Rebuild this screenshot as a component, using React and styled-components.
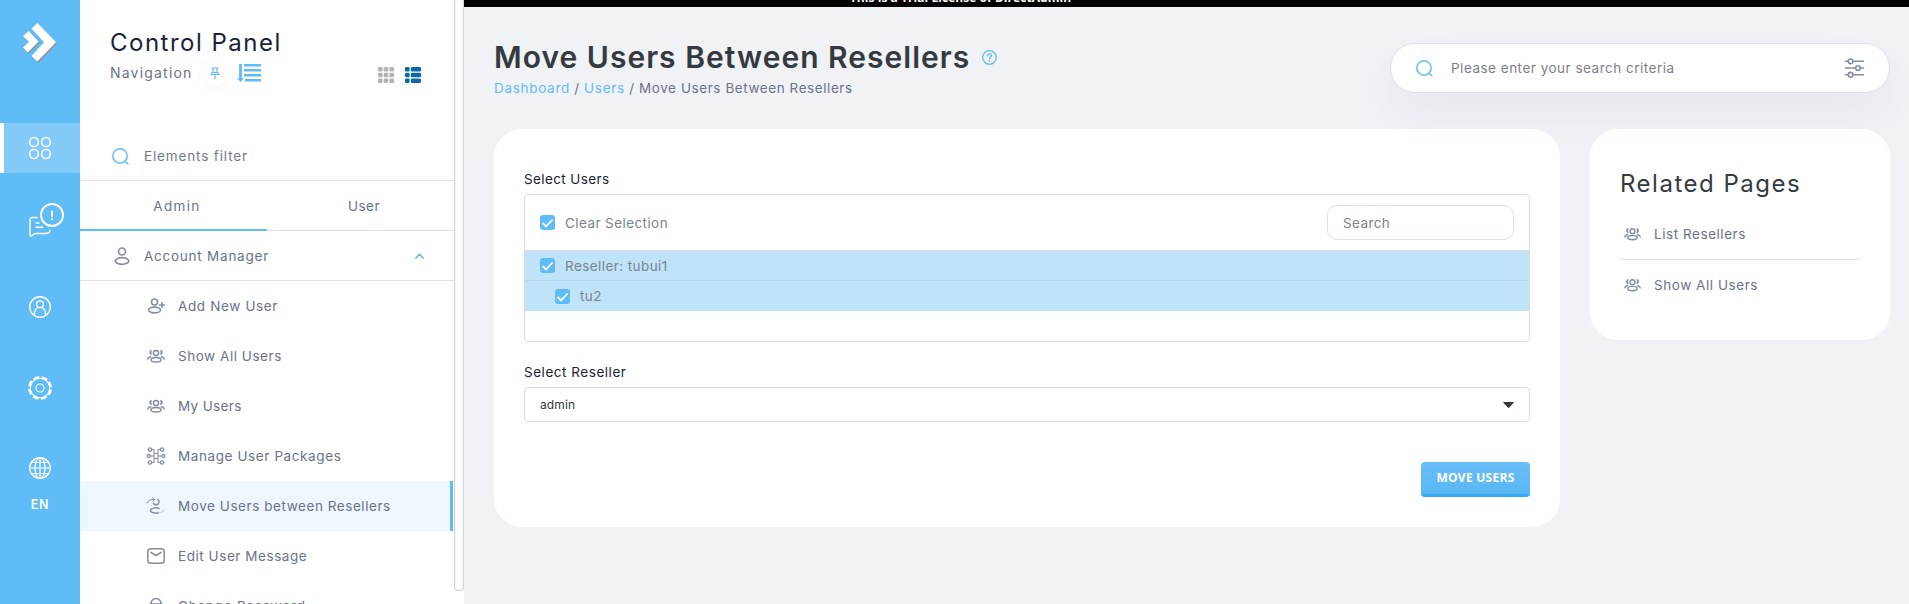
import React from 'react';
import styled, { createGlobalStyle } from 'styled-components';

const GlobalStyle = createGlobalStyle`
  *, *::before, *::after { box-sizing: border-box; }
  body {
    margin: 0;
    overflow: hidden;
    background: #f1f2f6;
    color: #6a7389;
    font: 400 13.5px/20px Inter, "Open Sans", sans-serif;
  }
  svg { display: block; flex: none; overflow: visible; }
`;

const accent = '#60bcf7';
const line = '#dce1ea';

const Page = styled.div`
  display: flex;
  height: 604px;
  overflow: hidden;
`;

/* Left rail */
const Rail = styled.nav`
  display: flex;
  flex-direction: column;
  align-items: center;
  flex: none;
  width: 80px;
  background: ${accent};
  color: #fff;
`;
const LogoBox = styled.div`
  height: 123px;
  padding-top: 23px;
`;
const RailItem = styled.div`
  display: flex;
  align-items: center;
  justify-content: center;
  width: 80px;
  height: ${(p) => p.$h}px;
  border-left: 4px solid ${(p) => (p.$active ? '#fff' : 'transparent')};
  padding-right: 4px;
  background: ${(p) => (p.$active ? '#83caf8' : 'transparent')};
  background-clip: padding-box;
`;
const Lang = styled.div`
  margin-top: -12px;
  font-size: 12.5px;
  font-weight: 600;
  letter-spacing: 0.8px;
`;

/* Navigation panel */
const Panel = styled.aside`
  flex: none;
  width: 374px;
  height: 604px;
  overflow: hidden;
  background: #fff;
`;
const PanelHead = styled.header`
  display: flex;
  justify-content: space-between;
  height: 130px;
  padding: 27px 33px 0 30px;
`;
const PanelTitle = styled.h2`
  margin: 0;
  color: #1b2338;
  font-size: 24px;
  font-weight: 400;
  line-height: 32px;
  letter-spacing: 1.49px;
`;
const SubTitle = styled.div`
  display: flex;
  align-items: center;
  height: 28px;
`;
const SubText = styled.span`
  width: 93px;
  font-size: 14px;
  letter-spacing: 1.2px;
`;
const RoundButton = styled.span`
  display: flex;
  align-items: center;
  justify-content: center;
  width: 24px;
  height: 24px;
  margin-right: 10px;
  border-radius: 50%;
  background: #fff;
  box-shadow: 0 4px 10px rgba(80, 90, 140, 0.05);
`;
const ViewSwitch = styled.div`
  display: flex;
  gap: 11px;
  padding-top: 40px;
`;
const Filter = styled.div`
  display: flex;
  align-items: center;
  gap: 15px;
  height: 51px;
  padding: 2px 0 0 32px;
  border-bottom: 1px solid ${line};
  letter-spacing: 0.86px;
  color: #707a88;
`;
const Tabs = styled.div`
  display: flex;
  height: 50px;
`;
const Tab = styled.div`
  flex: 1;
  padding: 15px 0 0 7px;
  text-align: center;
  letter-spacing: ${(p) => (p.$active ? 1.35 : 0.5)}px;
  border-bottom: ${(p) => (p.$active ? `2px solid ${accent}` : `1px solid ${line}`)};
`;
const Group = styled.div`
  display: flex;
  align-items: center;
  height: 50px;
  padding: 0 30px 0 34px;
  border-bottom: 1px solid ${line};
`;
const GroupLabel = styled.span`
  flex: 1;
  margin-left: 14px;
  letter-spacing: 0.76px;
`;
const Entry = styled.a`
  display: flex;
  align-items: center;
  gap: 13px;
  width: 373px;
  height: 50px;
  padding-left: 67px;
  letter-spacing: ${(p) => p.$ls}px;
  background: ${(p) => (p.$active ? '#eef7fe' : 'transparent')};
  border-right: 3px solid ${(p) => (p.$active ? accent : 'transparent')};
`;
const Gutter = styled.div`
  flex: none;
  width: 10px;
  background: #fff;
`;
const Thumb = styled.div`
  height: 591px;
  border: 1px solid #d4d4d4;
  border-top: 0;
  border-radius: 0 0 4px 4px;
  background: #fff;
  box-shadow: inset 0 0 2px rgba(0, 0, 0, 0.12);
`;

/* Main area */
const Main = styled.main`
  flex: 1;
  min-width: 0;
`;
const Banner = styled.div`
  display: flex;
  align-items: flex-end;
  justify-content: center;
  height: 7px;
  padding: 0 0 1px 0;
  overflow: hidden;
  background: #000;
  color: #fff;
  font: 700 12px/16px "Open Sans", sans-serif;
  letter-spacing: 0.05px;
`;
const BannerText = styled.span`
  margin-right: 452px;
`;
const Header = styled.header`
  display: flex;
  justify-content: space-between;
  height: 122px;
  padding: 30px 19px 0 30px;
`;
const TitleRow = styled.div`
  display: flex;
  align-items: center;
  gap: 12px;
  height: 40px;
`;
const Title = styled.h1`
  margin: -1px 0 0;
  color: #343a40;
  font-size: 30px;
  font-weight: 600;
  line-height: 40px;
  letter-spacing: 1.02px;
`;
const Crumbs = styled.div`
  margin-top: 1px;
  letter-spacing: 0.57px;
`;
const CrumbLink = styled.a`
  color: ${accent};
  letter-spacing: 0.7px;
`;
const SearchBar = styled.div`
  display: flex;
  align-items: center;
  position: relative;
  width: 500px;
  height: 50px;
  margin-top: 6px;
  padding: 0 25px;
  border: 1px solid ${line};
  border-radius: 25px;
  background: #fff;
  box-shadow: 0 20px 40px rgba(80, 80, 140, 0.06);
`;
const SearchHint = styled.span`
  flex: 1;
  margin-left: 18px;
  color: #7c7f86;
  letter-spacing: 0.5px;
`;
const Content = styled.div`
  display: flex;
  align-items: flex-start;
  gap: 30px;
  padding: 0 19px 0 30px;
`;
const Card = styled.section`
  flex: 1;
  height: 398px;
  padding: 40px 30px 0;
  border-radius: 28px;
  background: #fff;
`;
const Label = styled.div`
  height: 25px;
  color: #1b2338;
  letter-spacing: ${(p) => p.$ls}px;
`;
const SelectBox = styled.div`
  height: 148px;
  margin-bottom: 20px;
  border: 1px solid #dcdcdc;
  border-radius: 4px;
`;
const SelectHead = styled.div`
  display: flex;
  align-items: center;
  justify-content: space-between;
  height: 56px;
  padding: 0 15px;
  border-bottom: 1px solid #d9dde2;
`;
const Check = styled.div`
  display: flex;
  align-items: center;
  gap: 10px;
  color: #7b828c;
  letter-spacing: 0.42px;
`;
const ListSearch = styled.div`
  width: 187px;
  height: 35px;
  padding: 7px 15px;
  border: 1px solid #dde1ec;
  border-radius: 10px;
  color: #808388;
  letter-spacing: 0.4px;
`;
const ListRow = styled.div`
  display: flex;
  align-items: center;
  height: 30px;
  padding-left: ${(p) => (p.$child ? 30 : 15)}px;
  background: #bfe4fa;
  border-bottom: ${(p) => (p.$child ? 0 : 1)}px solid #b3d8ee;
`;
const Dropdown = styled.div`
  display: flex;
  align-items: center;
  justify-content: space-between;
  height: 35px;
  padding: 0 15px;
  border: 1px solid #dcdcdc;
  border-radius: 4px;
  color: #343a40;
  font-size: 12px;
  letter-spacing: 0.1px;
`;
const Actions = styled.div`
  display: flex;
  justify-content: flex-end;
  margin-top: 40px;
`;
const Button = styled.button`
  width: 109px;
  height: 35px;
  padding: 0;
  border: 0;
  border-bottom: 3px solid #35a7f1;
  border-radius: 4px;
  background: linear-gradient(#69bff8, #59b7f5);
  color: #fff;
  font: 700 12px/32px "Open Sans", sans-serif;
  letter-spacing: 0.27px;
`;
const Related = styled.aside`
  width: 300px;
  height: 211px;
  padding: 38px 30px 0;
  border-radius: 28px;
  background: #fff;
`;
const RelatedTitle = styled.h3`
  margin: 0 0 8px;
  color: #343a40;
  font-size: 24px;
  font-weight: 400;
  line-height: 34px;
  letter-spacing: 1.5px;
`;
const RelatedLink = styled.a`
  display: flex;
  align-items: center;
  gap: 13px;
  height: 50px;
  padding-left: 4px;
  letter-spacing: 0.55px;
  & + & { height: 51px; border-top: 1px solid #dbdfe7; }
`;

/* Drawings */
const Svg = ({ w = 18, h = w, vw = w, vh = h, sw = 1.3, color = '#858da3', children }) => (
  <svg width={w} height={h} viewBox={`0 0 ${vw} ${vh}`} fill="none" stroke={color} strokeWidth={sw} strokeLinecap="round" strokeLinejoin="round">
    {children}
  </svg>
);

const Logo = () => (
  <svg width="35" height="40" viewBox="0 0 35 40">
    <g fill="#8d9296" transform="translate(1 1.3)">
      <path d="M8.5 5.7 14.4 0 33 19.3 14.4 38.6 8.5 33 21 19.3Z" />
      <path d="M0 13.2 5.6 8 15.5 18.4 4.8 29.5 0 24.6 6 18.8Z" />
    </g>
    <g fill="#fff">
      <path d="M8.5 5.7 14.4 0 33 19.3 14.4 38.6 8.5 33 21 19.3Z" />
      <path d="M0 13.2 5.6 8 15.5 18.4 4.8 29.5 0 24.6 6 18.8Z" />
    </g>
  </svg>
);
const Circles = () => (
  <Svg w={22} color="#fff" sw={1.5}>
    <circle cx="5" cy="5" r="4.4" /><circle cx="17" cy="5" r="4.4" />
    <circle cx="5" cy="17" r="4.4" /><circle cx="17" cy="17" r="4.4" />
  </Svg>
);
const Chat = () => (
  <Svg w={22} h={34} color="#fff" sw={1.4}>
    <path d="M8 14.5H3.5Q1 14.5 1 17v15q0 2 2 .6l3-2.1h11.500q3 0 3.500-3" />
    <path d="M7 20h3M7 24.200h7" />
    <circle cx="23" cy="12" r="11" strokeWidth="1.900" fill={accent} />
    <path d="M23 8.200v5M23 16v.2" strokeWidth="1.900" />
  </Svg>
);
const UserCircle = () => (
  <Svg w={22} color="#fff" sw={1.4}>
    <circle cx="11" cy="11" r="10.300" /><circle cx="11" cy="8.300" r="3.400" />
    <path d="M5.500 19v-1.500c0-3 1.500-5 3.400-6M16.500 19v-1.500c0-3-1.500-5-3.400-6" />
  </Svg>
);
const Gear = () => (
  <Svg w={24} color="#fff" sw={1.1}>
    <circle cx="12" cy="12" r="4" />
    <circle cx="12" cy="12" r="9.800" />
    <circle cx="12" cy="12" r="10.600" strokeWidth="2.800" strokeLinecap="butt" strokeDasharray="5.700 2.625" transform="rotate(8 12 12)" />
  </Svg>
);
const Globe = () => (
  <Svg w={22} color="#fff" sw={1.3}>
    <circle cx="11" cy="11" r="10.300" /><ellipse cx="11" cy="11" rx="5" ry="10.300" />
    <path d="M11 .7v20.600M.7 11h20.600M2.500 5.300h17M2.500 16.700h17" strokeWidth="1.100" />
  </Svg>
);
const Pin = () => (
  <Svg w={10} h={13} color={accent} sw={1.2}>
    <path d="M2 1h6M3 1v4.500M7 1v4.500M1 7.500q.5-2 2-2h4q1.500 0 2 2ZM5 7.500V12" />
  </Svg>
);
const Sort = () => (
  <Svg w={24} h={18} color={accent} sw={2.500}>
    <g strokeLinecap="butt">
      <path d="M7 1.300h17M7 6.300h17M7 11.300h17M8 16.300h16" />
      <path d="M3.500 0v15" strokeWidth="2.800" />
    </g>
    <path d="M0 14.300h7L3.500 18Z" fill={accent} stroke="none" />
  </Svg>
);
const Grid = () => (
  <svg width="16" height="16" fill="#b3b3b3">
    {[0, 5.700, 11.400].map((y) => [0, 5.700, 11.400].map((x) => <rect key={`${x}-${y}`} x={x} y={y} width="4.600" height="4.600" rx="1.300" />))}
  </svg>
);
const ListIcon = () => (
  <svg width="16" height="16" fill="#0c68a8">
    {[0, 5.700, 11.400].map((y) => (
      <g key={y}><rect y={y} width="4.600" height="4.600" rx="1.300" /><rect x="5.900" y={y} width="10.100" height="4.600" rx="1.300" /></g>
    ))}
  </svg>
);
const Magnifier = ({ size = 17 }) => (
  <Svg w={size} vw={17} color={accent} sw={1.5}><circle cx="8" cy="8" r="7.200" /><path d="M13 13.300 16 16" /></Svg>
);
const User = () => (
  <Svg w={16} h={18} sw={1.700}><circle cx="8" cy="4.500" r="3.500" /><ellipse cx="8" cy="14" rx="6.800" ry="3.300" /></Svg>
);
const UserPlus = () => (
  <Svg h={16} sw={1.600}><circle cx="7.500" cy="4" r="3" /><ellipse cx="7.500" cy="12" rx="6" ry="2.900" /><path d="M12.500 7h5M15 4.500v5" /></Svg>
);
const Users = ({ w = 18 }) => (
  <Svg w={w} h={14} vw={18} vh={14} sw={1.500}>
    <circle cx="9" cy="4" r="2.600" /><ellipse cx="9" cy="10.800" rx="5" ry="2.300" />
    <path d="M4 1.500Q2 3.200 4 5.300M14 1.500q2 1.700 0 3.800M3.700 7.800Q1.300 8 .8 10M14.300 7.800q2.400.2 2.900 2.200" />
    <path d="M3.700 2.500v2M14.300 2.500v2" />
  </Svg>
);
const Packages = () => (
  <Svg w={18} sw={1.300}>
    <circle cx="3" cy="2.500" r="1.700" /><circle cx="15" cy="2.500" r="1.700" /><circle cx="1.700" cy="9" r="1.500" /><circle cx="16.300" cy="9" r="1.500" /><circle cx="3" cy="15.500" r="1.700" /><circle cx="15" cy="15.500" r="1.700" />
    <path d="M5 2.500h2v13H5M13 2.500h-2v13h2M7 6.500h4M7 11.500h4M3.500 9H7M11 9h3.500" strokeWidth="1.100" />
  </Svg>
);
const MoveUser = () => (
  <Svg w={18} sw={1.500}>
    <path d="M0 6Q2 1.700 7 2.500M5.500.5 7.500 2.500 6 4.300" strokeWidth="1" />
    <path d="M11 2.600A3 3 0 1 1 6.500 6.500" />
    <path d="M12 11.500c-3-1.300-8.500-.4-8.500 2s6 3 8.500 2" />
    <path d="M11 15.500q4.500 1 6-3M15 14.500l3-1" stroke="#c9cfda" strokeWidth=".8" />
  </Svg>
);
const Mail = () => (
  <Svg h={16} sw={1.500}><rect x=".8" y=".8" width="16.400" height="14.400" rx="3" /><path d="M4 4.500 9 7.500l5-3" /></Svg>
);
const Lock = () => (
  <Svg w={18} sw={1.600}><path d="M4 8V6.500a5 5 0 0 1 10 0V8" /><rect x="1.500" y="7" width="15" height="11" rx="3" /></Svg>
);
const Help = () => (
  <Svg w={15} color={accent} sw={1.300}><circle cx="7.500" cy="7.500" r="6.800" /><path d="M5.500 5.900q0-2 2-2t2 1.800c0 1.200-2 1.300-2 3M7.500 10.900v.2" /></Svg>
);
const Sliders = () => (
  <Svg w={19} h={20} sw={1.600}>
    <g strokeLinecap="butt"><path d="M0 3.300h3M8 3.300h11M0 10h10.500M15.500 10H19M0 16.700h3M8 16.700h11" /></g>
    <circle cx="5.600" cy="3.300" r="2.300" /><circle cx="12.900" cy="10" r="2.300" /><circle cx="5.600" cy="16.700" r="2.300" />
  </Svg>
);
const Tick = () => (
  <svg width="15" height="15"><rect width="15" height="15" rx="3" fill={accent} /><path d="M2.600 8 6 11.400 12.600 4.500" fill="none" stroke="#fff" strokeWidth="1.800" /></svg>
);
const Chevron = () => (
  <Svg w={9} h={6} color={accent} sw={1.600}><path d="M.8 5 4.500 1.200 8.200 5" /></Svg>
);

const entries = [
  ['Add New User', UserPlus, 0.64],
  ['Show All Users', Users, 0.54],
  ['My Users', Users, 0.35],
  ['Manage User Packages', Packages, 0.6],
  ['Move Users between Resellers', MoveUser, 0.56],
  ['Edit User Message', Mail, 0.55],
  ['Change Password', Lock, 0.8],
];

export default function App() {
  return (
    <Page>
      <GlobalStyle />
      <Rail>
        <LogoBox><Logo /></LogoBox>
        <RailItem $h={50} $active><Circles /></RailItem>
        <RailItem $h={94}><Chat /></RailItem>
        <RailItem $h={80}><UserCircle /></RailItem>
        <RailItem $h={81}><Gear /></RailItem>
        <RailItem $h={79}><Globe /></RailItem>
        <Lang>EN</Lang>
      </Rail>
      <Panel>
        <PanelHead>
          <div>
            <PanelTitle>Control Panel</PanelTitle>
            <SubTitle>
              <SubText>Navigation</SubText>
              <RoundButton><Pin /></RoundButton>
              <Sort />
            </SubTitle>
          </div>
          <ViewSwitch><Grid /><ListIcon /></ViewSwitch>
        </PanelHead>
        <Filter><Magnifier />Elements filter</Filter>
        <Tabs><Tab $active>Admin</Tab><Tab>User</Tab></Tabs>
        <Group><User /><GroupLabel>Account Manager</GroupLabel><Chevron /></Group>
        {entries.map(([name, Icon, ls]) => (
          <Entry key={name} $ls={ls} $active={Icon === MoveUser}><Icon />{name}</Entry>
        ))}
      </Panel>
      <Gutter><Thumb /></Gutter>
      <Main>
        <Banner><BannerText>This is a Trial License of DirectAdmin</BannerText></Banner>
        <Header>
          <div>
            <TitleRow><Title>Move Users Between Resellers</Title><Help /></TitleRow>
            <Crumbs><CrumbLink>Dashboard</CrumbLink> / <CrumbLink>Users</CrumbLink> / Move Users Between Resellers</Crumbs>
          </div>
          <SearchBar><Magnifier /><SearchHint>Please enter your search criteria</SearchHint><Sliders /></SearchBar>
        </Header>
        <Content>
          <Card>
            <Label $ls={0.38}>Select Users</Label>
            <SelectBox>
              <SelectHead>
                <Check><Tick />Clear Selection</Check>
                <ListSearch>Search</ListSearch>
              </SelectHead>
              <ListRow><Check><Tick />Reseller: tubui1</Check></ListRow>
              <ListRow $child><Check><Tick />tu2</Check></ListRow>
            </SelectBox>
            <Label $ls={0.53}>Select Reseller</Label>
            <Dropdown>admin<svg width="11" height="6"><path d="M.3 0h10.400q.3.500 0 .8L6 5.700q-.5.400-1 0L.3.800Q0 .5.300 0Z" fill="#343a40" /></svg></Dropdown>
            <Actions><Button>MOVE USERS</Button></Actions>
          </Card>
          <Related>
            <RelatedTitle>Related Pages</RelatedTitle>
            <RelatedLink><Users w={17} />List Resellers</RelatedLink>
            <RelatedLink><Users w={17} />Show All Users</RelatedLink>
          </Related>
        </Content>
      </Main>
    </Page>
  );
}
